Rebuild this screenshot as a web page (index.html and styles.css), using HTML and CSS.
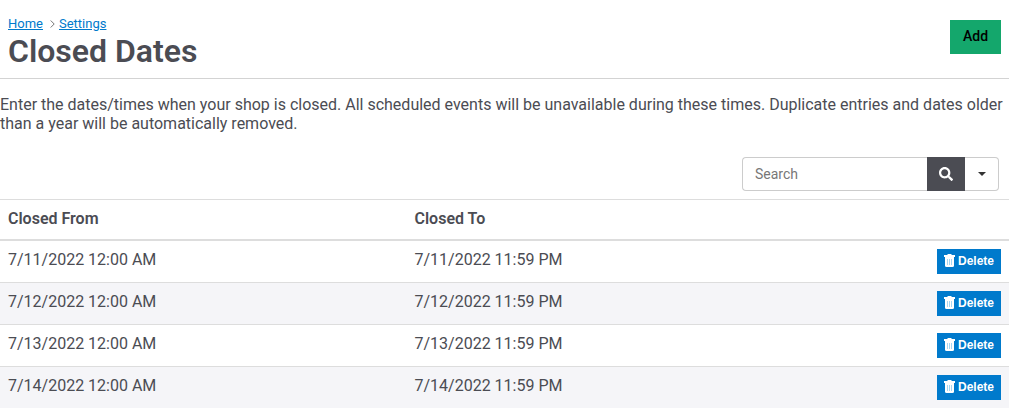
FILE: index.html
```html
<!DOCTYPE html>
<html lang="en">
<head>
  <meta charset="UTF-8">
  <meta name="viewport" content="width=device-width, initial-scale=1.0">
  <title>Closed Dates</title>
  <link rel="stylesheet" href="styles.css">
</head>
<body>
  <svg class="sprite" aria-hidden="true">
    <symbol id="trash" viewBox="0 0 11 13">
      <path fill="#fff" d="M3 1 4 0h3l1 1h3v2H0V1z"/>
      <path fill="#fff" d="M1 3h9v8.500q0 1.500-1.500 1.500h-6Q1 13 1 11.500z"/>
      <path stroke="#8fcdf0" stroke-width=".8" d="M3.500 5v6M5.500 5v6M7.500 5v6"/>
    </symbol>
  </svg>

  <header class="page-header">
    <div>
      <nav class="breadcrumb">
        <a href="#">Home</a>
        <svg class="chevron" viewBox="0 0 5 8"><path d="M.7.5 4.2 4 .7 7.5"/></svg>
        <a href="#">Settings</a>
      </nav>
      <h1>Closed Dates</h1>
    </div>
    <button type="button" class="btn-add">Add</button>
  </header>

  <p class="intro">Enter the dates/times when your shop is closed. All scheduled events will be unavailable during these times. Duplicate entries and dates older than a year will be automatically removed.</p>

  <form class="search">
    <input type="text" placeholder="Search" aria-label="Search">
    <button type="button" class="btn-search" aria-label="Search">
      <svg viewBox="0 0 512 512"><path d="M505 442.700 405.300 343c-4.500-4.500-10.600-7-17-7H372c27.600-35.300 44-79.700 44-128C416 93.100 322.900 0 208 0S0 93.100 0 208s93.100 208 208 208c48.300 0 92.700-16.400 128-44v16.300c0 6.400 2.500 12.500 7 17l99.700 99.700c9.400 9.400 24.600 9.400 33.900 0l28.300-28.300c9.400-9.400 9.400-24.600.1-34zM208 336c-70.700 0-128-57.200-128-128 0-70.700 57.200-128 128-128 70.700 0 128 57.200 128 128 0 70.700-57.200 128-128 128z"/></svg>
    </button>
    <button type="button" class="btn-caret" aria-label="Search options"><span class="caret"></span></button>
  </form>

  <table class="dates">
    <thead>
      <tr><th>Closed From</th><th>Closed To</th><th class="actions"></th></tr>
    </thead>
    <tbody>
      <tr>
        <td>7/11/2022 12:00 AM</td>
        <td>7/11/2022 11:59 PM</td>
        <td class="actions"><button type="button" class="btn-delete"><svg><use href="#trash"/></svg>Delete</button></td>
      </tr>
      <tr>
        <td>7/12/2022 12:00 AM</td>
        <td>7/12/2022 11:59 PM</td>
        <td class="actions"><button type="button" class="btn-delete"><svg><use href="#trash"/></svg>Delete</button></td>
      </tr>
      <tr>
        <td>7/13/2022 12:00 AM</td>
        <td>7/13/2022 11:59 PM</td>
        <td class="actions"><button type="button" class="btn-delete"><svg><use href="#trash"/></svg>Delete</button></td>
      </tr>
      <tr>
        <td>7/14/2022 12:00 AM</td>
        <td>7/14/2022 11:59 PM</td>
        <td class="actions"><button type="button" class="btn-delete"><svg><use href="#trash"/></svg>Delete</button></td>
      </tr>
    </tbody>
  </table>
</body>
</html>
```

FILE: styles.css
```css
* {
  box-sizing: border-box;
}

body {
  margin: 0 6px 0 0;
  background: #fff;
  color: #4b4c53;
  font-family: Roboto, sans-serif;
  font-size: 16px;
  line-height: 19px;
}

button,
input {
  margin: 0;
  font-family: inherit;
}

button {
  cursor: pointer;
}

.sprite {
  display: none;
}

.page-header {
  display: flex;
  justify-content: space-between;
  align-items: flex-start;
  padding: 16px 8px 8px;
  border-bottom: 1px solid #d3d3d3;
}

.breadcrumb {
  display: flex;
  align-items: center;
  font-size: 13px;
  line-height: 16px;
}

.breadcrumb a {
  color: #007acc;
}

.chevron {
  width: 5px;
  height: 8px;
  margin: 0 4px 0 7px;
  fill: none;
  stroke: #777;
}

h1 {
  margin: 0;
  font-size: 32px;
  font-weight: 600;
  line-height: 38px;
}

.btn-add {
  width: 51px;
  height: 34px;
  margin-top: 4px;
  padding: 0 0 2px;
  border: 0;
  background: #14a76c;
  color: #000;
  font-size: 14px;
  font-weight: 500;
}

.intro {
  margin: 16px 0 24px;
}

.search {
  display: flex;
  justify-content: flex-end;
  height: 34px;
  margin: 0 10px 8px 0;
}

.search input {
  width: 185px;
  padding: 0 12px;
  border: 1px solid #ccc;
  border-right: 0;
  border-radius: 4px 0 0 4px;
  color: #4b4c53;
  font-size: 14px;
}

.search input::placeholder {
  color: #777;
}

.btn-search {
  display: flex;
  justify-content: center;
  align-items: center;
  width: 38px;
  padding: 0;
  border: 0;
  background: #4b4c53;
}

.btn-search svg {
  width: 14px;
  height: 14px;
  fill: #fff;
}

.btn-caret {
  display: flex;
  justify-content: center;
  align-items: center;
  width: 34px;
  padding: 0;
  border: 1px solid #ccc;
  border-left: 0;
  border-radius: 0 4px 4px 0;
  background: #fff;
}

.caret {
  border-top: 4px solid #333;
  border-right: 4px solid transparent;
  border-left: 4px solid transparent;
}

.dates {
  width: 100%;
  border-spacing: 0;
  table-layout: fixed;
  line-height: 22px;
}

.dates th,
.dates td {
  padding: 8px;
  text-align: left;
  vertical-align: top;
}

.dates th {
  padding-bottom: 9px;
  border-top: 1px solid #ddd;
  border-bottom: 2px solid #ddd;
  font-weight: 600;
}

.dates tr + tr td {
  border-top: 1px solid #ddd;
}

.dates tbody tr:nth-child(even) {
  background: #f5f5f8;
}

.dates .actions {
  width: 196px;
  text-align: right;
}

.btn-delete {
  display: inline-flex;
  justify-content: center;
  align-items: center;
  gap: 3px;
  width: 64px;
  height: 25px;
  padding: 0 0 2px;
  border: 0;
  background: #007acc;
  color: #fff;
  font-family: "Liberation Sans", Arial, sans-serif;
  font-size: 12px;
  font-weight: bold;
  vertical-align: top;
}

.btn-delete svg {
  width: 11px;
  height: 13px;
}
```
